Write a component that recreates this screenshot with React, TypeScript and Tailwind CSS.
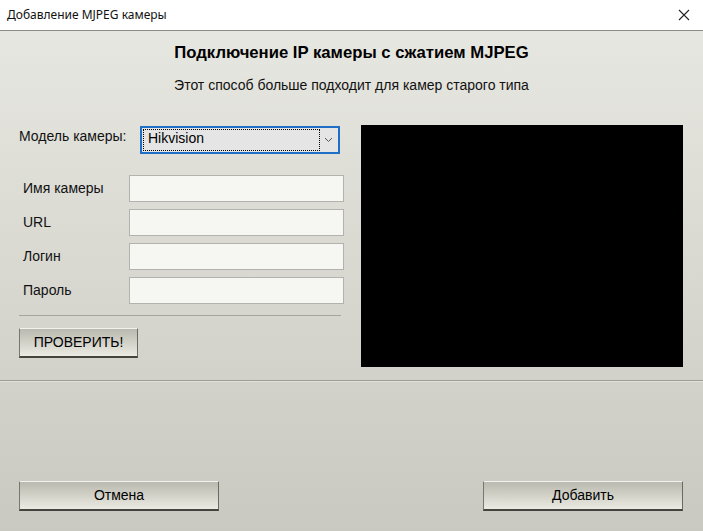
import React from "react";

const btn =
  "flex items-center justify-center text-[14px] text-black bg-gradient-to-b from-[#b9b9af] to-[#ebebe3] border-t border-t-[#f3f3ee] border-l border-l-[#77776f] border-r border-r-[#6a6a63] border-b-2 border-b-[#44443e]";

function Field({ label }: { label: string }) {
  return (
    <div className="flex items-center h-[27px]">
      <div className="w-[110px] pl-[4px] text-[14px] text-[#111]">{label}</div>
      <div className="w-[215px] h-[27px] bg-[#f6f6f2] border border-[#b3b3ad]" />
    </div>
  );
}

export default function App() {
  return (
    <div
      className="w-[703px] h-[531px] flex flex-col overflow-hidden"
      style={{ fontFamily: '"Liberation Sans", Arial, sans-serif' }}
    >
      <div className="h-[31px] shrink-0 bg-white border-b border-[#8a8a8a] flex items-center justify-between pl-[7px] pr-[10px]">
        <span className="text-[12px] text-[#111]" style={{ fontFamily: '"Noto Sans", "Open Sans", sans-serif' }}>
          Добавление MJPEG камеры
        </span>
        <svg width="12" height="12" viewBox="0 0 12 12" className="mr-[3px]">
          <path d="M1 1 L11 11 M11 1 L1 11" stroke="#222" strokeWidth="1.1" />
        </svg>
      </div>
      <div className="flex-1 flex flex-col bg-gradient-to-b from-[#e7e7e1] to-[#c9c9c1]">
        <div className="pt-[12px] text-center text-[16.7px] font-bold text-black leading-[20px]">
          Подключение IP камеры с сжатием MJPEG
        </div>
        <div className="mt-[14px] text-center text-[14px] text-[#111] leading-[16px]">
          Этот способ больше подходит для камер старого типа
        </div>
        <div className="mt-[32px] flex pl-[19px]">
          <div className="w-[325px] flex flex-col">
            <div className="flex items-start h-[28px] mt-[1px]">
              <div className="w-[121px] text-[14px] text-[#111]">Модель камеры:</div>
              <div className="w-[200px] h-[28px] border-2 border-[#1f6fc7] bg-[#e5e5e5] flex items-stretch p-[1px]">
                <div className="flex-1 border border-dotted border-black text-[14px] leading-[16px] pl-[4px] text-black">
                  Hikvision
                </div>
                <div className="w-[17px] flex items-center justify-center">
                  <svg width="9" height="6" viewBox="0 0 9 6">
                    <path d="M1 1 L4.5 4.5 L8 1" stroke="#555" strokeWidth="1" fill="none" />
                  </svg>
                </div>
              </div>
            </div>
            <div className="mt-[21px] flex flex-col gap-[7px]">
              <Field label="Имя камеры" />
              <Field label="URL" />
              <Field label="Логин" />
              <Field label="Пароль" />
            </div>
            <div className="mt-[11px] mr-[3px] border-t border-[#a5a5a0]" />
            <div className={`${btn} mt-[12px] w-[119px] h-[30px]`}>ПРОВЕРИТЬ!</div>
          </div>
          <div className="ml-[17px] w-[322px] h-[242px] bg-black" />
        </div>
        <div className="mt-[13px] border-t border-[#9d9d97] border-b border-b-[#e3e3dc]" />
        <div className="mt-auto pb-[20px] flex justify-between px-[19px] pr-[20px]">
          <div className={`${btn} w-[200px] h-[30px]`}>Отмена</div>
          <div className={`${btn} w-[200px] h-[30px]`}>Добавить</div>
        </div>
      </div>
    </div>
  );
}
